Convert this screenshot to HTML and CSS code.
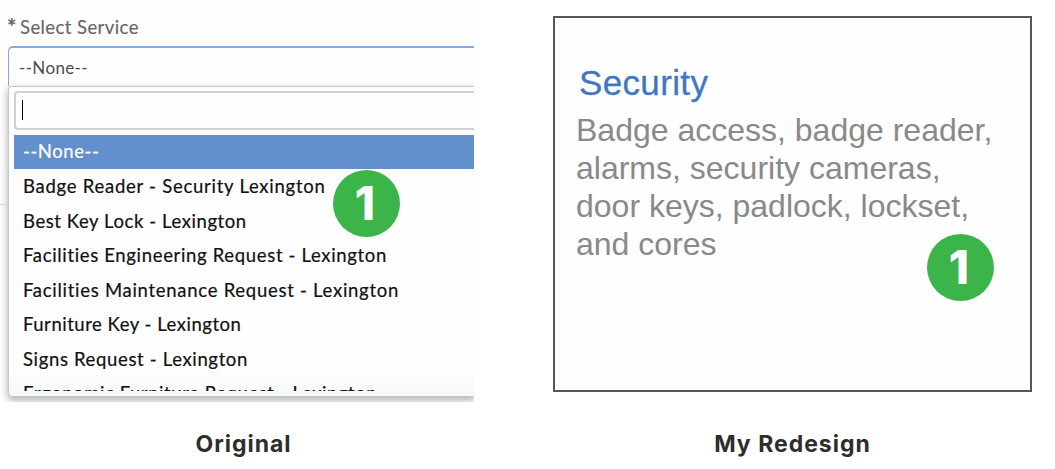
FILE: index.html
```html
<!DOCTYPE html>
<html lang="en">
<head>
<meta charset="utf-8">
<title>Service picker comparison</title>
<link rel="stylesheet" href="styles.css">
</head>
<body>
<main class="comparison">
  <figure class="original">
    <div class="form">
      <div class="label"><span class="required">*</span><span class="label-text">Select Service</span></div>
      <div class="select"><span class="select-value">--None--</span></div>
      <div class="dropdown">
        <div class="search"><span class="caret"></span></div>
        <ul class="options">
          <li class="option selected"><span class="o-none">--None--</span></li>
          <li class="option"><span class="o-badge">Badge Reader - Security Lexington</span></li>
          <li class="option"><span class="o-lock">Best Key Lock - Lexington</span></li>
          <li class="option"><span class="o-eng">Facilities Engineering Request - Lexington</span></li>
          <li class="option"><span class="o-maint">Facilities Maintenance Request - Lexington</span></li>
          <li class="option"><span class="o-key">Furniture Key - Lexington</span></li>
          <li class="option"><span class="o-signs">Signs Request - Lexington</span></li>
          <li class="option"><span class="o-ergo">Ergonomic Furniture Request - Lexington</span></li>
        </ul>
      </div>
      <span class="divider"></span>
      <span class="badge badge-left">1</span>
    </div>
    <figcaption class="caption caption-left">Original</figcaption>
  </figure>
  <figure class="redesign">
    <div class="card">
      <h2 class="title">Security</h2>
      <p class="description">Badge access, badge reader,<br>alarms, security cameras,<br>door keys, padlock, lockset,<br>and cores</p>
      <span class="badge badge-right">1</span>
    </div>
    <figcaption class="caption caption-right">My Redesign</figcaption>
  </figure>
</main>
</body>
</html>
```
FILE: styles.css
```css
* { box-sizing: border-box; }
body { margin: 0; background: #fff; font-family: Lato, sans-serif; }
.comparison { display: flex; width: 1055px; height: 469px; overflow: hidden; }
figure { margin: 0; }
.original { width: 474px; margin-right: 79px; }
.form { position: relative; height: 402px; padding: 14px 0 0 8px; overflow: hidden; background: #fefefe; }
.label { display: flex; height: 32px; line-height: 27px; font-size: 18.5px; color: #66656d; white-space: nowrap; -webkit-text-stroke: .15px; }
.required { width: 12px; font-size: 22px; font-weight: 700; line-height: 26px; margin-left: -1px; margin-right: 1px; }
.label-text { letter-spacing: .42px; }
.select { height: 40px; padding-left: 10px; border: 2px solid #85aadd; border-width: 2px 0 0 1px; border-radius: 5px 0 0 0; color: #4c4c4e; font-size: 17px; line-height: 39px; letter-spacing: .35px; }
.dropdown { height: 311px; padding: 4px 0 0 5px; border: 1px solid #c5c7c8; border-right: 0; border-radius: 4px 0 0 5px; background: linear-gradient(#fefefe 285px, #f5f8f8); box-shadow: 0 3px 7px 1px rgba(0,0,0,.27); }
.search { height: 39px; padding: 7px 0 0 6px; border: 2px solid #d0d0d5; border-right: 0; border-radius: 4px 0 0 4px; }
.caret { display: block; width: 1px; height: 20px; background: #000; }
.options { height: 256px; margin: 5px 0 0; padding: 0; overflow: hidden; list-style: none; }
.option { height: 34.5px; padding-left: 9px; color: #101112; font-size: 18.5px; line-height: 34.4px; white-space: nowrap; -webkit-text-stroke: .2px; }
.selected { height: 34.4px; background: #6190cc; color: #fff; line-height: 33px; }
.o-none { letter-spacing: .55px; }
.o-badge { letter-spacing: .74px; }
.o-lock { letter-spacing: .58px; }
.o-eng { letter-spacing: .66px; }
.o-maint { letter-spacing: .72px; }
.o-key { letter-spacing: .52px; }
.o-signs { letter-spacing: .65px; }
.o-ergo { letter-spacing: .57px; }
.divider { position: absolute; left: 0; top: 204px; width: 8px; height: 1px; background: #d5d5d5; }
.badge { position: absolute; display: flex; align-items: center; justify-content: center; width: 67px; height: 67px; padding-right: 3px; border-radius: 50%; background: #3bb54a; color: #fff; font: 800 46px/67px Inter, sans-serif; }
.badge-left { left: 333px; top: 170px; }
.redesign { width: 479px; padding-top: 16px; }
.card { position: relative; height: 376px; padding: 44px 0 0 22px; border: 2px solid #565656; background: #fefefe; font-family: "Liberation Sans", sans-serif; }
.title { margin: 0 0 0 2px; color: #4177c0; font-size: 35px; font-weight: 400; line-height: 42px; letter-spacing: .35px; -webkit-text-stroke: .3px; }
.description { margin: 7px 0 0 -1px; color: #898989; font-size: 32px; line-height: 38px; white-space: nowrap; }
.badge-right { left: 372px; top: 216px; }
.caption { color: #2d2d2d; font: 700 23px/28px Inter, sans-serif; letter-spacing: 1px; text-align: center; white-space: nowrap; }
.caption-left { padding: 28px 0 0 13px; }
.caption-right { padding-top: 38px; }
```
